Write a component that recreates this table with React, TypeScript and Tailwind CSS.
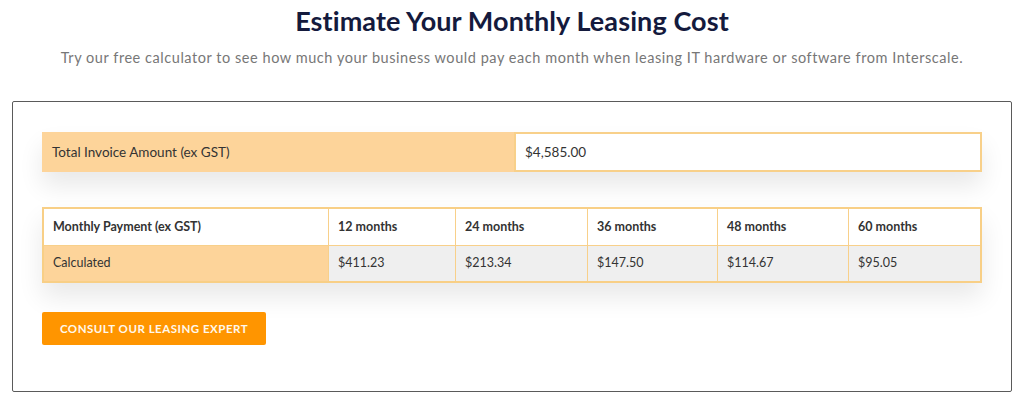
import React from 'react';

const terms = [
    { label: '12 months', value: '$411.23' },
    { label: '24 months', value: '$213.34' },
    { label: '36 months', value: '$147.50' },
    { label: '48 months', value: '$114.67' },
    { label: '60 months', value: '$95.05' },
];

export default function App() {
    return (
        <div className="w-[1024px] h-[414px] bg-white font-['Lato',sans-serif] overflow-hidden">
            <div className="pt-[5px] text-center">
                <h1 className="text-[27px] leading-[32px] font-bold text-[#141a3d] tracking-[0.1px]">
                    Estimate Your Monthly Leasing Cost
                </h1>
                <p className="mt-[11px] text-[14.5px] leading-[20px] text-[#777] tracking-[0.55px]">
                    Try our free calculator to see how much your business would pay each month when leasing IT hardware or software from Interscale.
                </p>
            </div>

            <div className="mx-[12px] mt-[33px] h-[291px] border border-[#5a5a5a] rounded-[2px] px-[29px] pt-[30px]">
                {/* invoice row */}
                <div className="flex h-[40px] text-[13.5px] text-[#333] shadow-[0_14px_24px_rgba(0,0,0,0.09)]">
                    <div className="w-[472px] bg-[#fdd49a] flex items-center pl-[10px]">
                        Total Invoice Amount (ex GST)
                    </div>
                    <div className="flex-1 bg-white border-2 border-[#f8d08a] flex items-center pl-[9px]">
                        $4,585.00
                    </div>
                </div>

                {/* payment table */}
                <div className="mt-[35px] border-2 border-[#f8cf86] text-[12.5px] text-[#333] shadow-[0_14px_24px_rgba(0,0,0,0.09)]">
                    <div className="grid grid-cols-[284px_127px_132px_130px_131px_1fr] h-[36px] bg-white font-bold">
                        <div className="flex items-center pl-[9px]">Monthly Payment (ex GST)</div>
                        {terms.map((t) => (
                            <div key={t.label} className="flex items-center pl-[9px] border-l border-[#f8d08a]">
                                {t.label}
                            </div>
                        ))}
                    </div>
                    <div className="grid grid-cols-[284px_127px_132px_130px_131px_1fr] h-[36px] border-t border-[#f8d08a]">
                        <div className="flex items-center pl-[9px] bg-[#fdd49a]">Calculated</div>
                        {terms.map((t) => (
                            <div key={t.value} className="flex items-center pl-[9px] bg-[#efefef] border-l border-[#f8d08a]">
                                {t.value}
                            </div>
                        ))}
                    </div>
                </div>

                <button className="mt-[29px] w-[224px] h-[33px] rounded-[2px] bg-[#ff9500] text-[#fff8ec] text-[11.5px] font-bold tracking-[0.5px] uppercase">
                    Consult our leasing expert
                </button>
            </div>
        </div>
    );
}
